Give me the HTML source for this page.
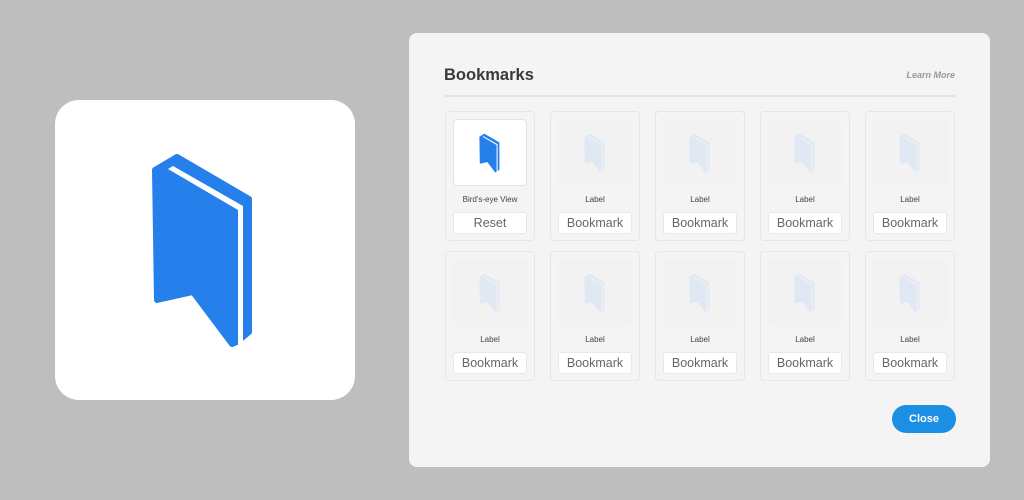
<!DOCTYPE html>
<html><head><meta charset="utf-8"><style>
body{margin:0;width:1024px;height:500px;background:#bebebe;position:relative;overflow:hidden;font-family:"Liberation Sans",sans-serif}
.app{position:absolute;left:55px;top:100px;width:300px;height:300px;background:#fff;border-radius:24px}
.panel{position:absolute;left:409px;top:33px;width:581px;height:434px;background:#f4f4f4;border-radius:8px}
h1{position:absolute;left:35px;top:33px;margin:0;font-size:16.5px;font-weight:bold;color:#3a3a3a}
.lm{position:absolute;right:35px;top:37px;font-size:9px;font-style:italic;font-weight:bold;color:#999}
.hr{position:absolute;left:35px;top:62px;width:512px;height:2px;background:#e4e4e4}
.card{position:absolute;width:88px;height:128px;border:1px solid #e6e6e6;border-radius:4px;background:#f4f4f4}
.th{position:absolute;left:7px;top:7px;width:74px;height:67px;border-radius:4px;background:#f2f2f2;display:flex;align-items:center;justify-content:center}
.card.a .th{background:#fff;border:1px solid #e4e4e4;width:72px;height:65px}
.lb{position:absolute;left:0;right:0;top:83px;text-align:center;font-size:8px;color:#444}
.bt{position:absolute;left:7px;top:100px;width:74px;height:22px;background:#fff;border:1px solid #e8e8e8;box-sizing:border-box;border-radius:3px;text-align:center;line-height:21px;font-size:12.5px;color:#666}
.close{position:absolute;left:483px;top:372px;width:64px;height:28px;border-radius:14px;background:#1a8fe3;color:#fff;font-weight:bold;font-size:11px;text-align:center;line-height:28px}
</style></head><body>
<svg width="0" height="0" style="position:absolute"><defs><g id="ic">
<polygon points="155,170 177,157 249,199 249,332 237,342 232,344 193,292 157,300" fill="currentColor" stroke="currentColor" stroke-width="6" stroke-linejoin="round"/>
<polygon points="168,169 173,166 243,206 243,348 238,348 238,210" fill="var(--g)"/>
</g></defs></svg>
<div class="app"><svg style="position:absolute;left:0;top:0" width="300" height="300" viewBox="55 100 300 300"><use href="#ic" style="color:#2680eb;--g:#fff"/></svg></div>
<div class="panel">
<h1>Bookmarks</h1><div class="lm">Learn More</div><div class="hr"></div>

<div class="card a" style="left:36px;top:78px"><div class="th"><svg width="22" height="40" viewBox="150 150 110 200"><use href="#ic" style="color:#2680eb;--g:#fff"/></svg></div><div class="lb">Bird's-eye View</div><div class="bt">Reset</div></div>
<div class="card" style="left:141px;top:78px"><div class="th"><svg width="22" height="40" viewBox="150 150 110 200"><use href="#ic" style="color:#e0e8f4;--g:#f2f2f2"/></svg></div><div class="lb">Label</div><div class="bt">Bookmark</div></div>
<div class="card" style="left:246px;top:78px"><div class="th"><svg width="22" height="40" viewBox="150 150 110 200"><use href="#ic" style="color:#e0e8f4;--g:#f2f2f2"/></svg></div><div class="lb">Label</div><div class="bt">Bookmark</div></div>
<div class="card" style="left:351px;top:78px"><div class="th"><svg width="22" height="40" viewBox="150 150 110 200"><use href="#ic" style="color:#e0e8f4;--g:#f2f2f2"/></svg></div><div class="lb">Label</div><div class="bt">Bookmark</div></div>
<div class="card" style="left:456px;top:78px"><div class="th"><svg width="22" height="40" viewBox="150 150 110 200"><use href="#ic" style="color:#e0e8f4;--g:#f2f2f2"/></svg></div><div class="lb">Label</div><div class="bt">Bookmark</div></div>

<div class="card" style="left:36px;top:218px"><div class="th"><svg width="22" height="40" viewBox="150 150 110 200"><use href="#ic" style="color:#e0e8f4;--g:#f2f2f2"/></svg></div><div class="lb">Label</div><div class="bt">Bookmark</div></div>
<div class="card" style="left:141px;top:218px"><div class="th"><svg width="22" height="40" viewBox="150 150 110 200"><use href="#ic" style="color:#e0e8f4;--g:#f2f2f2"/></svg></div><div class="lb">Label</div><div class="bt">Bookmark</div></div>
<div class="card" style="left:246px;top:218px"><div class="th"><svg width="22" height="40" viewBox="150 150 110 200"><use href="#ic" style="color:#e0e8f4;--g:#f2f2f2"/></svg></div><div class="lb">Label</div><div class="bt">Bookmark</div></div>
<div class="card" style="left:351px;top:218px"><div class="th"><svg width="22" height="40" viewBox="150 150 110 200"><use href="#ic" style="color:#e0e8f4;--g:#f2f2f2"/></svg></div><div class="lb">Label</div><div class="bt">Bookmark</div></div>
<div class="card" style="left:456px;top:218px"><div class="th"><svg width="22" height="40" viewBox="150 150 110 200"><use href="#ic" style="color:#e0e8f4;--g:#f2f2f2"/></svg></div><div class="lb">Label</div><div class="bt">Bookmark</div></div>

<div class="close">Close</div>
</div>
</body></html>
